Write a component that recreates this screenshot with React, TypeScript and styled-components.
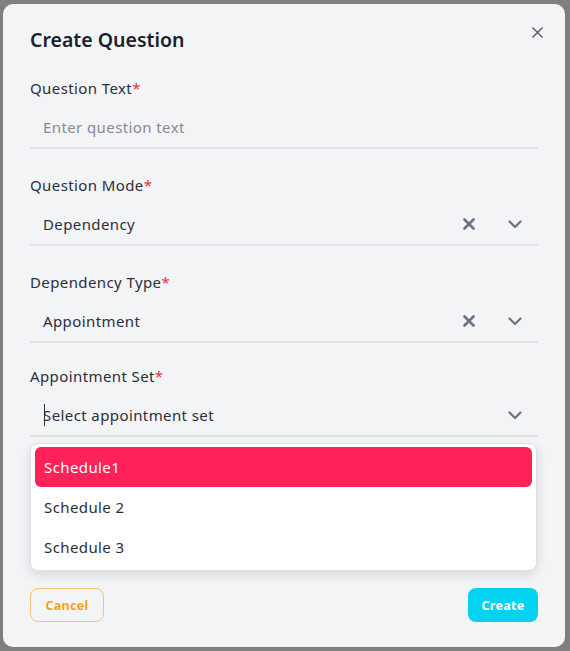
import styled, { createGlobalStyle } from 'styled-components';

const GlobalStyle = createGlobalStyle`
  html, body {
    margin: 0;
    padding: 0;
    background: #7f7f7f;
    font-family: 'Noto Sans', 'Open Sans', sans-serif;
  }
  * {
    box-sizing: border-box;
  }
`;

const SCHEDULES = ['Schedule1', 'Schedule 2', 'Schedule 3'];

const ClearIcon = () => (
  <svg width="12" height="12" viewBox="0 0 12 12">
    <path d="M1.5 1.5 L10.5 10.5 M10.5 1.5 L1.5 10.5" stroke="#6b7180" strokeWidth="2.6" strokeLinecap="round" />
  </svg>
);

const ChevronIcon = () => (
  <svg width="14" height="9" viewBox="0 0 14 9">
    <path d="M1.5 1.5 L7 7 L12.5 1.5" stroke="#6b7180" strokeWidth="2.2" fill="none" strokeLinecap="round" strokeLinejoin="round" />
  </svg>
);

const CloseIcon = () => (
  <svg width="11" height="11" viewBox="0 0 11 11">
    <path d="M0.5 0.5 L10.5 10.5 M10.5 0.5 L0.5 10.5" stroke="#4b5060" strokeWidth="1.3" />
  </svg>
);

export default function App() {
  return (
    <>
      <GlobalStyle />
      <Backdrop>
        <Modal>
          <Header>
            <h2>Create Question</h2>
            <CloseButton>
              <CloseIcon />
            </CloseButton>
          </Header>

          <Field>
            <Label>
              Question Text<span>*</span>
            </Label>
            <Row>
              <Placeholder>Enter question text</Placeholder>
            </Row>
          </Field>

          <Field>
            <Label>
              Question Mode<span>*</span>
            </Label>
            <Row>
              <Value>Dependency</Value>
              <Icons>
                <ClearIcon />
                <ChevronIcon />
              </Icons>
            </Row>
          </Field>

          <Field>
            <Label>
              Dependency Type<span>*</span>
            </Label>
            <Row>
              <Value>Appointment</Value>
              <Icons>
                <ClearIcon />
                <ChevronIcon />
              </Icons>
            </Row>
          </Field>

          <Field $open>
            <Label>
              Appointment Set<span>*</span>
            </Label>
            <Row>
              <Value>
                <Caret />
                Select appointment set
              </Value>
              <Icons>
                <ChevronIcon />
              </Icons>
            </Row>
            <Menu>
              {SCHEDULES.map((item, idx) => (
                <MenuItem key={item} $active={idx === 0}>
                  {item}
                </MenuItem>
              ))}
            </Menu>
          </Field>

          <Footer>
            <CancelButton>Cancel</CancelButton>
            <CreateButton>Create</CreateButton>
          </Footer>
        </Modal>
      </Backdrop>
    </>
  );
}

const Backdrop = styled.div`
  position: fixed;
  inset: 0;
  background: #7f7f7f;
  padding: 4px 5px 4px 3px;
  display: flex;
`;

const Modal = styled.div`
  flex: 1;
  background: #f3f4f6;
  border-radius: 10px;
  padding: 0 27px 25px;
  display: flex;
  flex-direction: column;
`;

const Header = styled.div`
  display: flex;
  justify-content: space-between;
  align-items: flex-start;
  height: 73px;

  h2 {
    margin: 24px 0 0;
    font-size: 19.5px;
    line-height: 24px;
    font-weight: 600;
    color: #1b1f2c;
  }
`;

const CloseButton = styled.button`
  border: none;
  background: none;
  padding: 0;
  margin: 21px -6px 0 0;
  width: 14px;
  height: 14px;
  display: flex;
  align-items: center;
  justify-content: center;
`;

const Field = styled.div<{ $open?: boolean }>`
  position: relative;
  margin-top: ${(props) => (props.$open ? '-3px' : '0')};
  margin-bottom: 25px;
  z-index: ${(props) => (props.$open ? 2 : 1)};
`;

const Label = styled.div`
  font-size: 15px;
  line-height: 22px;
  color: #2b2f3b;
  letter-spacing: 0.4px;
  margin-bottom: 8px;

  span {
    color: #ef2b45;
  }
`;

const Row = styled.div`
  height: 42px;
  display: flex;
  align-items: center;
  padding: 0 16px 0 13px;
  border-bottom: 2px solid #e1e3e8;
`;

const Placeholder = styled.div`
  font-size: 15px;
  letter-spacing: 0.4px;
  color: #868a95;
`;

const Value = styled.div`
  flex: 1;
  position: relative;
  font-size: 15px;
  letter-spacing: 0.4px;
  color: #2b2f3b;
`;

const Caret = styled.span`
  position: absolute;
  left: 1px;
  top: -1px;
  width: 1px;
  height: 22px;
  background: #2b2f3b;
`;

const Icons = styled.div`
  display: flex;
  align-items: center;
  gap: 33px;
`;

const Menu = styled.div`
  position: absolute;
  left: 0;
  right: 1px;
  top: calc(100% + 6px);
  background: #ffffff;
  border: 1px solid #dcdfe4;
  border-radius: 8px;
  box-shadow: 0 4px 12px rgba(0, 0, 0, 0.12);
  padding: 3px 4px 3px;
`;

const MenuItem = styled.div<{ $active?: boolean }>`
  height: 40px;
  display: flex;
  align-items: center;
  padding: 0 9px;
  border-radius: 6px;
  font-size: 15px;
  letter-spacing: 0.4px;
  background: ${(props) => (props.$active ? '#ff2157' : 'transparent')};
  color: ${(props) => (props.$active ? '#ffffff' : '#2b2f3b')};
`;

const Footer = styled.div`
  margin-top: auto;
  display: flex;
  justify-content: space-between;
`;

const BaseButton = styled.button`
  height: 34px;
  border-radius: 8px;
  font-family: 'Noto Sans', 'Open Sans', sans-serif;
  font-size: 12.5px;
  font-weight: 700;
  letter-spacing: 0.3px;
  padding: 0;
`;

const CancelButton = styled(BaseButton)`
  width: 74px;
  background: transparent;
  border: 1.5px solid #fbc36a;
  color: #f7a21b;
`;

const CreateButton = styled(BaseButton)`
  width: 70px;
  background: #03d3f1;
  border: none;
  color: #ffffff;
`;
